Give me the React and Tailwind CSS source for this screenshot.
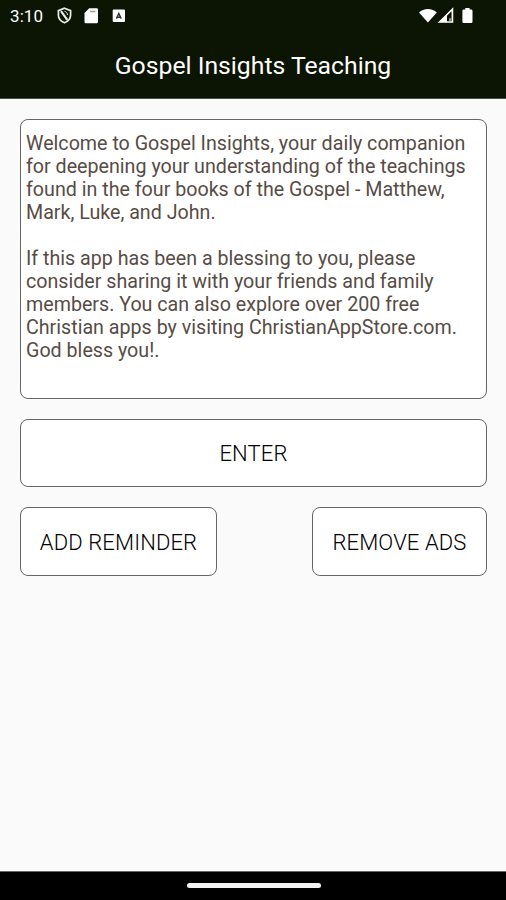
const paragraphs = [
  [
    "Welcome to Gospel Insights, your daily companion",
    "for deepening your understanding of the teachings",
    "found in the four books of the Gospel - Matthew,",
    "Mark, Luke, and John.",
  ],
  [
    "If this app has been a blessing to you, please",
    "consider sharing it with your friends and family",
    "members. You can also explore over 200 free",
    "Christian apps by visiting ChristianAppStore.com.",
    "God bless you!.",
  ],
];

function StatusBar() {
  return (
    <div className="flex h-8 items-center justify-between pl-[10px] pr-[30px] text-white">
      <div className="flex items-center">
        <span className="w-[34px] whitespace-nowrap text-[17px] leading-8 tracking-[0.1px]">3:10</span>
        <svg className="ml-[12px] h-[18px] w-[17px]" viewBox="0 0 17 18" fill="none" stroke="#e8ebe6">
          <path d="M8.500 1.200 14.600 3.600v4.500c0 3.600-2.300 6.300-6.100 7.700-3.800-1.400-6.100-4.100-6.100-7.700V3.600z" strokeWidth="1.700" />
          <path d="M5 4.200 11.300 12.800" strokeWidth="2.200" />
          <path d="M8.500 4.400c2 .3 3 1.800 2.900 3.600" strokeWidth="1" />
        </svg>
        <svg className="ml-[11px] h-[18px] w-[15px]" viewBox="0 0 15 18">
          <path d="M5.200 1.300h7.500q1.300 0 1.300 1.300v12.300q0 1.300-1.300 1.300H1.800Q.5 16.200.5 14.900V6z" fill="#fff" />
          <path d="M6 4.500h5.500" stroke="#a0a59c" strokeWidth="1.600" />
        </svg>
        <svg className="ml-[13px] h-[14px] w-[14px]" viewBox="0 0 14 14">
          <rect x=".7" y=".5" width="12.300" height="12.600" rx="1" fill="#fff" />
          <path d="M4.400 9.600 6.800 4.400 9.200 9.600M5.300 8.200h3" fill="none" stroke="#30372a" strokeWidth="1.400" />
        </svg>
      </div>
      <svg className="h-5 w-[57px]" viewBox="0 0 57 20" fill="#fff">
        <path d="M0 6.500C4.500 1.700 13.300 1.700 17.800 6.500L8.900 16.600z" />
        <path d="M20.600 16 33.400 3.200V16z" fill="none" stroke="#fff" strokeWidth="1.700" />
        <path d="M28 9V16h-7z" />
        <path d="M30 12.200h2v2.600h-2z" fill="#a0a59c" />
        <path d="M46.300 1.900h4.300v1.700h1.500q1.400 0 1.400 1.400v10.700q0 1.400-1.400 1.400h-7.300q-1.400 0-1.400-1.400V5q0-1.400 1.400-1.400h1.500z" />
      </svg>
    </div>
  );
}

function OutlineButton({ className, children }) {
  return (
    <button
      className={
        "flex items-center justify-center rounded-[8px] border border-[#666] bg-white text-[22px] font-light tracking-[0.12px] text-black whitespace-nowrap " +
        className
      }
    >
      {children}
    </button>
  );
}

export default function App() {
  return (
    <div className="flex h-[900px] w-[506px] flex-col overflow-hidden bg-[#fafafa] font-[Roboto,sans-serif]">
      <header className="h-[99px] shrink-0 border-b border-[#4b5144] bg-[#0c1404]">
        <StatusBar />
        <h1 className="text-center text-[24.750px] leading-[68px] text-white">Gospel Insights Teaching</h1>
      </header>
      <main className="flex flex-1 flex-col gap-5 pl-[20px] pr-[19px] pt-5">
        <section className="h-[280px] rounded-[8px] border border-[#666] bg-white pl-[5px] pt-[12px] text-[19.670px] leading-[23px] text-[#574c45]">
          {paragraphs.map((lines, index) => (
            <p key={index} className="mb-[23px]">
              {lines.map((line) => (
                <span key={line} className="block whitespace-nowrap">{line}</span>
              ))}
            </p>
          ))}
        </section>
        <OutlineButton className="h-[68px] w-full pt-px">ENTER</OutlineButton>
        <div className="flex justify-between">
          <OutlineButton className="h-[69px] w-[197px] pt-[2px]">ADD REMINDER</OutlineButton>
          <OutlineButton className="h-[69px] w-[175px] pt-[2px]">REMOVE ADS</OutlineButton>
        </div>
      </main>
      <footer className="flex h-[29px] shrink-0 justify-center border-t border-[#666] bg-black pt-[11px]">
        <div className="ml-[1px] h-[5px] w-[134px] rounded-full bg-[#f2f2f2]" />
      </footer>
    </div>
  );
}
